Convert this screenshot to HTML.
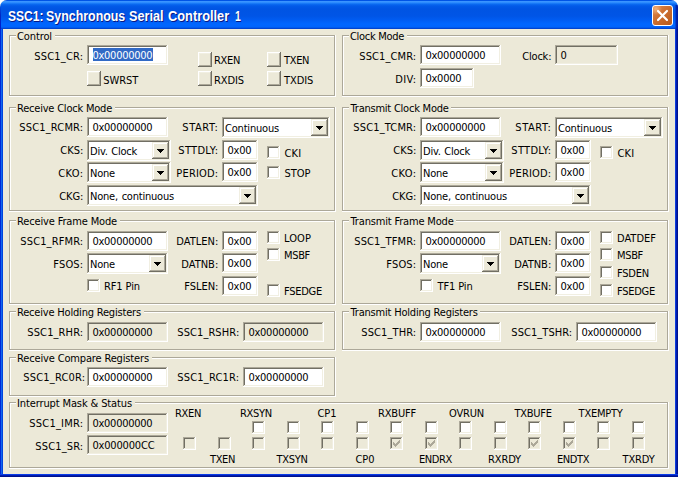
<!DOCTYPE html>
<html lang="en">
<head>
<meta charset="utf-8">
<title>SSC1: Synchronous Serial Controller 1</title>
<style>
html,body{margin:0;padding:0;}
body{width:678px;height:477px;overflow:hidden;background:#fff;position:relative;font-family:"DejaVu Sans Condensed","Liberation Sans",sans-serif;}
#w{position:absolute;left:0;top:0;width:678px;height:477px;background:#ECE9D8;overflow:hidden;border-radius:7px 7px 0 0;}
#tb{position:absolute;left:0;top:0;width:678px;height:29px;background:linear-gradient(to bottom,#0054E6 0,#0054E6 1px,#3C96FF 1px,#3792FF 2px,#2486FC 3px,#0C6CF2 4px,#025AE8 6px,#0054E3 9px,#0055E6 16px,#005CF2 20px,#0066FF 24px,#0064FC 27px,#0050E0 28px,#0038C2 29px);}
#ti{position:absolute;left:0;top:8px;width:400px;height:16px;font:bold 14px/16px "Liberation Sans",sans-serif;color:#fff;white-space:nowrap;text-shadow:1px 1px 0 #0A1883;}
#ti span{position:absolute;top:0;transform-origin:0 0;}
#bl{position:absolute;left:0;top:29px;width:3px;height:448px;background:linear-gradient(to right,#0028D6 0 1px,#1268EE 1px 2px,#0044DE 2px 3px);}
#bl2{position:absolute;left:0;top:6px;width:1px;height:23px;background:linear-gradient(to bottom,rgba(0,30,190,0),#0028C4 40%,#0019CF);}
#br{position:absolute;left:675px;top:29px;width:3px;height:448px;background:linear-gradient(to right,#0C3CDC 0 1px,#001DB0 1px 2px,#00128C 2px 3px);}
#br2{position:absolute;left:675px;top:5px;width:3px;height:24px;background:linear-gradient(to right,rgba(0,50,200,.3),#0024B0 50%,#001A98);}
#bb{position:absolute;left:0;top:474px;width:678px;height:3px;background:linear-gradient(to bottom,#0A3CE6 0 1px,#001BB0 1px 2px,#00128A 2px 3px);}
#x{position:absolute;left:652px;top:5px;width:19px;height:19px;border:1px solid #fff;border-radius:3px;background:radial-gradient(circle at 3px 3px,#F0B078 0,rgba(226,145,88,0) 6px),linear-gradient(135deg,#DE8A50 0%,#CC6E30 45%,#B85A1C 100%);}
.t{position:absolute;font-size:11px;line-height:13px;white-space:nowrap;color:#000;}
.g,.e,.cb,.rb,.c{position:absolute;background:
linear-gradient(var(--a),var(--a)) left 0 top 0/calc(100% - 1px) 1px no-repeat,
linear-gradient(var(--a),var(--a)) left 0 top 0/1px calc(100% - 1px) no-repeat,
linear-gradient(var(--b),var(--b)) left 0 bottom 0/100% 1px no-repeat,
linear-gradient(var(--b),var(--b)) right 0 top 0/1px 100% no-repeat,
linear-gradient(var(--c),var(--c)) left 1px top 1px/calc(100% - 3px) 1px no-repeat,
linear-gradient(var(--c),var(--c)) left 1px top 1px/1px calc(100% - 3px) no-repeat,
linear-gradient(var(--d),var(--d)) left 1px bottom 1px/calc(100% - 2px) 1px no-repeat,
linear-gradient(var(--d),var(--d)) right 1px top 1px/1px calc(100% - 2px) no-repeat,
var(--f);}
.g{--a:#ACA899;--b:#fff;--c:#fff;--d:#ACA899;--f:transparent;}
.gl{position:absolute;background:#ECE9D8;}
.e,.c{--a:#ACA899;--b:#fff;--c:#716F64;--d:#F1EFE2;--f:#fff;}
.e.ro,.c.dis{--f:#ECE9D8;}
.sel{position:absolute;background:#316AC5;}
.cb{width:17px;height:17px;--a:#F1EFE2;--b:#716F64;--c:#fff;--d:#ACA899;--f:#ECE9D8;}
.rb{width:14px;height:15px;--a:#fff;--b:#716F64;--c:#F1EFE2;--d:#ACA899;--f:#ECE9D8;}
.c{width:13px;height:13px;}
.ar{position:absolute;display:block;}
</style>
</head>
<body>
<div id="w">
<div id="tb"></div>
<div id="ti"><span style="left:7.7px;transform:scaleX(.86)">SSC1:</span> <span style="left:46.1px;transform:scaleX(.886)">Synchronous</span> <span style="left:129.1px;transform:scaleX(.905)">Serial</span> <span style="left:168px;transform:scaleX(.915)">Controller</span> <span style="left:235.2px;transform:scaleX(.75)">1</span></div>
<div id="x"><svg width="19" height="19" viewBox="0 0 19 19" style="display:block"><path d="M5 5l9 9M14 5l-9 9" stroke="#fff" stroke-width="2.2" stroke-linecap="round" fill="none"/></svg></div>
<div id="bl"></div><div id="bl2"></div><div id="br"></div><div id="br2"></div><div id="bb"></div>
<div class="g" style="left:9px;top:35px;width:327px;height:62px"></div>
<div class="gl" style="left:16px;top:34px;width:39px;height:4px"></div>
<div class="t" style="left:17px;top:30px;letter-spacing:-0.11px;">Control</div>
<div class="t" style="left:34.3px;top:50px;letter-spacing:0.19px;">SSC1_CR:</div>
<div class="e" style="left:87px;top:45px;width:81px;height:20px"></div>
<div class="sel" style="left:93px;top:48px;width:60px;height:13px"></div>
<div class="t" style="left:92.4px;top:49px;letter-spacing:-0.25px;color:#fff;">0x00000000</div>
<div class="rb" style="left:87px;top:71px"></div>
<div class="t" style="left:103.3px;top:74px;letter-spacing:-0.06px;">SWRST</div>
<div class="rb" style="left:198px;top:52px"></div>
<div class="t" style="left:214px;top:54px;letter-spacing:-0.33px;">RXEN</div>
<div class="rb" style="left:198px;top:71px"></div>
<div class="t" style="left:214px;top:74px;letter-spacing:-0.10px;">RXDIS</div>
<div class="rb" style="left:267px;top:52px"></div>
<div class="t" style="left:284.1px;top:54px;letter-spacing:-0.37px;">TXEN</div>
<div class="rb" style="left:267px;top:71px"></div>
<div class="t" style="left:284.1px;top:74px;letter-spacing:-0.13px;">TXDIS</div>
<div class="g" style="left:342px;top:35px;width:327px;height:62px"></div>
<div class="gl" style="left:349px;top:34px;width:58px;height:4px"></div>
<div class="t" style="left:350px;top:30px;letter-spacing:-0.30px;">Clock Mode</div>
<div class="t" style="left:359.3px;top:50px;letter-spacing:0.10px;">SSC1_CMR:</div>
<div class="e" style="left:420px;top:45px;width:81px;height:20px"></div>
<div class="t" style="left:425.4px;top:49px;letter-spacing:-0.25px;">0x00000000</div>
<div class="t" style="left:395.3px;top:73px;letter-spacing:0.31px;">DIV:</div>
<div class="e" style="left:420px;top:68px;width:54px;height:20px"></div>
<div class="t" style="left:425.4px;top:72px;letter-spacing:-0.22px;">0x0000</div>
<div class="t" style="left:522.3px;top:50px;letter-spacing:-0.21px;">Clock:</div>
<div class="e ro" style="left:555px;top:45px;width:63px;height:20px"></div>
<div class="t" style="left:560.4px;top:49px;letter-spacing:-0.30px;">0</div>
<div class="g" style="left:9px;top:107px;width:327px;height:105px"></div>
<div class="gl" style="left:16px;top:106px;width:99px;height:4px"></div>
<div class="t" style="left:17px;top:102px;letter-spacing:-0.21px;">Receive Clock Mode</div>
<div class="t" style="left:19.3px;top:121px;letter-spacing:0.16px;">SSC1_RCMR:</div>
<div class="e" style="left:87px;top:117px;width:81px;height:20px"></div>
<div class="t" style="left:92.4px;top:121px;letter-spacing:-0.25px;">0x00000000</div>
<div class="t" style="left:60.3px;top:144px;letter-spacing:-0.01px;">CKS:</div>
<div class="e" style="left:87px;top:140px;width:84px;height:21px"></div>
<div class="cb" style="left:152px;top:142px"></div>
<svg class="ar" style="left:157px;top:149px" width="7" height="4" viewBox="0 0 7 4"><path d="M0 0h7v1h-1v1h-1v1h-1v1h-1v-1h-1v-1h-1v-1h-1z" fill="#000"/></svg>
<div class="t" style="left:90px;top:145px;word-spacing:0.8px;letter-spacing:-0.23px;">Div. Clock</div>
<div class="t" style="left:58.3px;top:167px;letter-spacing:0.32px;">CKO:</div>
<div class="e" style="left:87px;top:162px;width:84px;height:21px"></div>
<div class="cb" style="left:152px;top:164px"></div>
<svg class="ar" style="left:157px;top:171px" width="7" height="4" viewBox="0 0 7 4"><path d="M0 0h7v1h-1v1h-1v1h-1v1h-1v-1h-1v-1h-1v-1h-1z" fill="#000"/></svg>
<div class="t" style="left:90px;top:167px;letter-spacing:-0.21px;">None</div>
<div class="t" style="left:59.3px;top:190px;letter-spacing:-0.10px;">CKG:</div>
<div class="e" style="left:87px;top:185px;width:171px;height:21px"></div>
<div class="cb" style="left:239px;top:187px"></div>
<svg class="ar" style="left:244px;top:194px" width="7" height="4" viewBox="0 0 7 4"><path d="M0 0h7v1h-1v1h-1v1h-1v1h-1v-1h-1v-1h-1v-1h-1z" fill="#000"/></svg>
<div class="t" style="left:90px;top:190px;word-spacing:0.8px;letter-spacing:-0.21px;">None, continuous</div>
<div class="t" style="left:182.3px;top:121px;letter-spacing:0.59px;">START:</div>
<div class="e" style="left:222px;top:117px;width:108px;height:21px"></div>
<div class="cb" style="left:311px;top:119px"></div>
<svg class="ar" style="left:316px;top:126px" width="7" height="4" viewBox="0 0 7 4"><path d="M0 0h7v1h-1v1h-1v1h-1v1h-1v-1h-1v-1h-1v-1h-1z" fill="#000"/></svg>
<div class="t" style="left:225px;top:122px;letter-spacing:-0.19px;">Continuous</div>
<div class="t" style="left:178.3px;top:144px;letter-spacing:0.32px;">STTDLY:</div>
<div class="e" style="left:222px;top:140px;width:36px;height:20px"></div>
<div class="t" style="left:227.4px;top:144px;letter-spacing:-0.19px;">0x00</div>
<div class="t" style="left:176.3px;top:167px;letter-spacing:0.18px;">PERIOD:</div>
<div class="e" style="left:222px;top:162px;width:36px;height:20px"></div>
<div class="t" style="left:227.4px;top:166px;letter-spacing:-0.19px;">0x00</div>
<div class="c" style="left:267px;top:146px"></div>
<div class="t" style="left:284.4px;top:147px;letter-spacing:0.22px;">CKI</div>
<div class="c" style="left:267px;top:166px"></div>
<div class="t" style="left:284.4px;top:167px;letter-spacing:-0.02px;">STOP</div>
<div class="g" style="left:342px;top:107px;width:327px;height:105px"></div>
<div class="gl" style="left:349px;top:106px;width:102px;height:4px"></div>
<div class="t" style="left:350.6px;top:102px;letter-spacing:-0.23px;">Transmit Clock Mode</div>
<div class="t" style="left:353.3px;top:121px;letter-spacing:0.15px;">SSC1_TCMR:</div>
<div class="e" style="left:420px;top:117px;width:81px;height:20px"></div>
<div class="t" style="left:425.4px;top:121px;letter-spacing:-0.25px;">0x00000000</div>
<div class="t" style="left:393.3px;top:144px;letter-spacing:-0.01px;">CKS:</div>
<div class="e" style="left:420px;top:140px;width:84px;height:21px"></div>
<div class="cb" style="left:485px;top:142px"></div>
<svg class="ar" style="left:490px;top:149px" width="7" height="4" viewBox="0 0 7 4"><path d="M0 0h7v1h-1v1h-1v1h-1v1h-1v-1h-1v-1h-1v-1h-1z" fill="#000"/></svg>
<div class="t" style="left:423px;top:145px;word-spacing:0.8px;letter-spacing:-0.23px;">Div. Clock</div>
<div class="t" style="left:391.3px;top:167px;letter-spacing:0.32px;">CKO:</div>
<div class="e" style="left:420px;top:162px;width:84px;height:21px"></div>
<div class="cb" style="left:485px;top:164px"></div>
<svg class="ar" style="left:490px;top:171px" width="7" height="4" viewBox="0 0 7 4"><path d="M0 0h7v1h-1v1h-1v1h-1v1h-1v-1h-1v-1h-1v-1h-1z" fill="#000"/></svg>
<div class="t" style="left:423px;top:167px;letter-spacing:-0.21px;">None</div>
<div class="t" style="left:392.3px;top:190px;letter-spacing:-0.10px;">CKG:</div>
<div class="e" style="left:420px;top:185px;width:171px;height:21px"></div>
<div class="cb" style="left:572px;top:187px"></div>
<svg class="ar" style="left:577px;top:194px" width="7" height="4" viewBox="0 0 7 4"><path d="M0 0h7v1h-1v1h-1v1h-1v1h-1v-1h-1v-1h-1v-1h-1z" fill="#000"/></svg>
<div class="t" style="left:423px;top:190px;word-spacing:0.8px;letter-spacing:-0.21px;">None, continuous</div>
<div class="t" style="left:515.3px;top:121px;letter-spacing:0.59px;">START:</div>
<div class="e" style="left:555px;top:117px;width:108px;height:21px"></div>
<div class="cb" style="left:644px;top:119px"></div>
<svg class="ar" style="left:649px;top:126px" width="7" height="4" viewBox="0 0 7 4"><path d="M0 0h7v1h-1v1h-1v1h-1v1h-1v-1h-1v-1h-1v-1h-1z" fill="#000"/></svg>
<div class="t" style="left:558px;top:122px;letter-spacing:-0.19px;">Continuous</div>
<div class="t" style="left:511.3px;top:144px;letter-spacing:0.32px;">STTDLY:</div>
<div class="e" style="left:555px;top:140px;width:36px;height:20px"></div>
<div class="t" style="left:560.4px;top:144px;letter-spacing:-0.19px;">0x00</div>
<div class="t" style="left:509.3px;top:167px;letter-spacing:0.18px;">PERIOD:</div>
<div class="e" style="left:555px;top:162px;width:36px;height:20px"></div>
<div class="t" style="left:560.4px;top:166px;letter-spacing:-0.19px;">0x00</div>
<div class="c" style="left:600px;top:146px"></div>
<div class="t" style="left:617.4px;top:147px;letter-spacing:0.22px;">CKI</div>
<div class="g" style="left:9px;top:220px;width:327px;height:85px"></div>
<div class="gl" style="left:16px;top:219px;width:104px;height:4px"></div>
<div class="t" style="left:17px;top:215px;letter-spacing:-0.15px;">Receive Frame Mode</div>
<div class="t" style="left:20.3px;top:235px;letter-spacing:0.13px;">SSC1_RFMR:</div>
<div class="e" style="left:87px;top:231px;width:81px;height:20px"></div>
<div class="t" style="left:92.4px;top:235px;letter-spacing:-0.25px;">0x00000000</div>
<div class="t" style="left:53.3px;top:258px;letter-spacing:0.16px;">FSOS:</div>
<div class="e" style="left:87px;top:253px;width:81px;height:21px"></div>
<div class="cb" style="left:149px;top:255px"></div>
<svg class="ar" style="left:154px;top:262px" width="7" height="4" viewBox="0 0 7 4"><path d="M0 0h7v1h-1v1h-1v1h-1v1h-1v-1h-1v-1h-1v-1h-1z" fill="#000"/></svg>
<div class="t" style="left:90px;top:258px;letter-spacing:-0.21px;">None</div>
<div class="c" style="left:87px;top:279px"></div>
<div class="t" style="left:104px;top:280px;letter-spacing:-0.11px;">RF1 Pin</div>
<div class="t" style="left:176.3px;top:235px;letter-spacing:0.02px;">DATLEN:</div>
<div class="e" style="left:222px;top:231px;width:36px;height:20px"></div>
<div class="t" style="left:227.4px;top:235px;letter-spacing:-0.19px;">0x00</div>
<div class="t" style="left:181.3px;top:258px;letter-spacing:0.01px;">DATNB:</div>
<div class="e" style="left:222px;top:253px;width:36px;height:20px"></div>
<div class="t" style="left:227.4px;top:257px;letter-spacing:-0.19px;">0x00</div>
<div class="t" style="left:184.3px;top:280px;letter-spacing:-0.05px;">FSLEN:</div>
<div class="e" style="left:222px;top:276px;width:36px;height:20px"></div>
<div class="t" style="left:227.4px;top:280px;letter-spacing:-0.19px;">0x00</div>
<div class="c" style="left:267px;top:231px"></div>
<div class="t" style="left:284px;top:232px;letter-spacing:0.08px;">LOOP</div>
<div class="c" style="left:267px;top:248px"></div>
<div class="t" style="left:284px;top:249px;letter-spacing:-0.33px;">MSBF</div>
<div class="c" style="left:267px;top:284px"></div>
<div class="t" style="left:284px;top:285px;letter-spacing:-0.27px;">FSEDGE</div>
<div class="g" style="left:342px;top:220px;width:327px;height:85px"></div>
<div class="gl" style="left:349px;top:219px;width:107px;height:4px"></div>
<div class="t" style="left:350.6px;top:215px;letter-spacing:-0.17px;">Transmit Frame Mode</div>
<div class="t" style="left:354.3px;top:235px;letter-spacing:0.11px;">SSC1_TFMR:</div>
<div class="e" style="left:420px;top:231px;width:81px;height:20px"></div>
<div class="t" style="left:425.4px;top:235px;letter-spacing:-0.25px;">0x00000000</div>
<div class="t" style="left:386.3px;top:258px;letter-spacing:0.16px;">FSOS:</div>
<div class="e" style="left:420px;top:253px;width:81px;height:21px"></div>
<div class="cb" style="left:482px;top:255px"></div>
<svg class="ar" style="left:487px;top:262px" width="7" height="4" viewBox="0 0 7 4"><path d="M0 0h7v1h-1v1h-1v1h-1v1h-1v-1h-1v-1h-1v-1h-1z" fill="#000"/></svg>
<div class="t" style="left:423px;top:258px;letter-spacing:-0.21px;">None</div>
<div class="c" style="left:420px;top:279px"></div>
<div class="t" style="left:437.6px;top:280px;letter-spacing:-0.13px;">TF1 Pin</div>
<div class="t" style="left:509.3px;top:235px;letter-spacing:0.02px;">DATLEN:</div>
<div class="e" style="left:555px;top:231px;width:36px;height:20px"></div>
<div class="t" style="left:560.4px;top:235px;letter-spacing:-0.19px;">0x00</div>
<div class="t" style="left:514.3px;top:258px;letter-spacing:0.01px;">DATNB:</div>
<div class="e" style="left:555px;top:253px;width:36px;height:20px"></div>
<div class="t" style="left:560.4px;top:257px;letter-spacing:-0.19px;">0x00</div>
<div class="t" style="left:517.3px;top:280px;letter-spacing:-0.05px;">FSLEN:</div>
<div class="e" style="left:555px;top:276px;width:36px;height:20px"></div>
<div class="t" style="left:560.4px;top:280px;letter-spacing:-0.19px;">0x00</div>
<div class="c" style="left:600px;top:231px"></div>
<div class="t" style="left:617px;top:232px;letter-spacing:0.01px;">DATDEF</div>
<div class="c" style="left:600px;top:248px"></div>
<div class="t" style="left:617px;top:249px;letter-spacing:-0.33px;">MSBF</div>
<div class="c" style="left:600px;top:266px"></div>
<div class="t" style="left:617px;top:267px;letter-spacing:-0.21px;">FSDEN</div>
<div class="c" style="left:600px;top:284px"></div>
<div class="t" style="left:617px;top:285px;letter-spacing:-0.27px;">FSEDGE</div>
<div class="g" style="left:9px;top:311px;width:327px;height:40px"></div>
<div class="gl" style="left:16px;top:310px;width:128px;height:4px"></div>
<div class="t" style="left:17px;top:306px;letter-spacing:-0.19px;">Receive Holding Registers</div>
<div class="t" style="left:27.3px;top:326px;letter-spacing:0.12px;">SSC1_RHR:</div>
<div class="e ro" style="left:87px;top:322px;width:81px;height:20px"></div>
<div class="t" style="left:92.4px;top:326px;letter-spacing:-0.25px;">0x00000000</div>
<div class="t" style="left:177.3px;top:326px;letter-spacing:0.08px;">SSC1_RSHR:</div>
<div class="e ro" style="left:243px;top:322px;width:81px;height:20px"></div>
<div class="t" style="left:248.4px;top:326px;letter-spacing:-0.25px;">0x00000000</div>
<div class="g" style="left:342px;top:311px;width:327px;height:40px"></div>
<div class="gl" style="left:349px;top:310px;width:131px;height:4px"></div>
<div class="t" style="left:350.6px;top:306px;letter-spacing:-0.20px;">Transmit Holding Registers</div>
<div class="t" style="left:361.3px;top:326px;letter-spacing:0.10px;">SSC1_THR:</div>
<div class="e" style="left:420px;top:322px;width:81px;height:20px"></div>
<div class="t" style="left:425.4px;top:326px;letter-spacing:-0.25px;">0x00000000</div>
<div class="t" style="left:511.3px;top:326px;letter-spacing:0.06px;">SSC1_TSHR:</div>
<div class="e" style="left:576px;top:322px;width:81px;height:20px"></div>
<div class="t" style="left:581.4px;top:326px;letter-spacing:-0.25px;">0x00000000</div>
<div class="g" style="left:9px;top:357px;width:327px;height:40px"></div>
<div class="gl" style="left:16px;top:356px;width:136px;height:4px"></div>
<div class="t" style="left:17px;top:352px;letter-spacing:-0.15px;">Receive Compare Registers</div>
<div class="t" style="left:23.3px;top:371px;letter-spacing:0.19px;">SSC1_RC0R:</div>
<div class="e" style="left:87px;top:367px;width:81px;height:20px"></div>
<div class="t" style="left:92.4px;top:371px;letter-spacing:-0.25px;">0x00000000</div>
<div class="t" style="left:177.3px;top:371px;letter-spacing:0.19px;">SSC1_RC1R:</div>
<div class="e" style="left:243px;top:367px;width:81px;height:20px"></div>
<div class="t" style="left:248.4px;top:371px;letter-spacing:-0.25px;">0x00000000</div>
<div class="g" style="left:9px;top:402px;width:660px;height:67px"></div>
<div class="gl" style="left:16px;top:401px;width:119px;height:4px"></div>
<div class="t" style="left:17px;top:397px;letter-spacing:-0.12px;">Interrupt Mask &amp; Status</div>
<div class="t" style="left:29.3px;top:417px;letter-spacing:0.22px;">SSC1_IMR:</div>
<div class="e ro" style="left:87px;top:413px;width:81px;height:20px"></div>
<div class="t" style="left:92.4px;top:417px;letter-spacing:-0.25px;">0x00000000</div>
<div class="t" style="left:35.3px;top:440px;letter-spacing:0.14px;">SSC1_SR:</div>
<div class="e ro" style="left:87px;top:435px;width:81px;height:20px"></div>
<div class="t" style="left:92.4px;top:439px;letter-spacing:-0.17px;">0x000000CC</div>
<div class="c dis" style="left:183px;top:437px"></div>
<div class="c dis" style="left:218px;top:437px"></div>
<div class="c" style="left:252px;top:421px"></div>
<div class="c dis" style="left:252px;top:437px"></div>
<div class="c" style="left:287px;top:421px"></div>
<div class="c dis" style="left:287px;top:437px"></div>
<div class="c" style="left:321px;top:421px"></div>
<div class="c dis" style="left:321px;top:437px"></div>
<div class="c" style="left:356px;top:421px"></div>
<div class="c dis" style="left:356px;top:437px"></div>
<div class="c" style="left:390px;top:421px"></div>
<div class="c dis" style="left:390px;top:437px"></div>
<svg class="ar" style="left:393px;top:440px" width="7" height="7" viewBox="0 0 7 7"><path d="M0 2h1v3H0zM1 3h1v3H1zM2 4h1v3H2zM3 3h1v3H3zM4 2h1v3H4zM5 1h1v3H5zM6 0h1v3H6z" fill="#ACA899" shape-rendering="crispEdges"/></svg>
<div class="c" style="left:425px;top:421px"></div>
<div class="c dis" style="left:425px;top:437px"></div>
<svg class="ar" style="left:428px;top:440px" width="7" height="7" viewBox="0 0 7 7"><path d="M0 2h1v3H0zM1 3h1v3H1zM2 4h1v3H2zM3 3h1v3H3zM4 2h1v3H4zM5 1h1v3H5zM6 0h1v3H6z" fill="#ACA899" shape-rendering="crispEdges"/></svg>
<div class="c" style="left:459px;top:421px"></div>
<div class="c dis" style="left:459px;top:437px"></div>
<div class="c" style="left:494px;top:421px"></div>
<div class="c dis" style="left:494px;top:437px"></div>
<div class="c" style="left:528px;top:421px"></div>
<div class="c dis" style="left:528px;top:437px"></div>
<svg class="ar" style="left:531px;top:440px" width="7" height="7" viewBox="0 0 7 7"><path d="M0 2h1v3H0zM1 3h1v3H1zM2 4h1v3H2zM3 3h1v3H3zM4 2h1v3H4zM5 1h1v3H5zM6 0h1v3H6z" fill="#ACA899" shape-rendering="crispEdges"/></svg>
<div class="c" style="left:563px;top:421px"></div>
<div class="c dis" style="left:563px;top:437px"></div>
<svg class="ar" style="left:566px;top:440px" width="7" height="7" viewBox="0 0 7 7"><path d="M0 2h1v3H0zM1 3h1v3H1zM2 4h1v3H2zM3 3h1v3H3zM4 2h1v3H4zM5 1h1v3H5zM6 0h1v3H6z" fill="#ACA899" shape-rendering="crispEdges"/></svg>
<div class="c" style="left:597px;top:421px"></div>
<div class="c dis" style="left:597px;top:437px"></div>
<div class="c" style="left:632px;top:421px"></div>
<div class="c dis" style="left:632px;top:437px"></div>
<div class="t" style="left:175px;top:407px;letter-spacing:-0.33px;">RXEN</div>
<div class="t" style="left:240px;top:407px;letter-spacing:-0.28px;">RXSYN</div>
<div class="t" style="left:317.5px;top:407px;letter-spacing:-0.06px;">CP1</div>
<div class="t" style="left:378px;top:407px;letter-spacing:-0.18px;">RXBUFF</div>
<div class="t" style="left:449px;top:407px;letter-spacing:-0.18px;">OVRUN</div>
<div class="t" style="left:514.6px;top:407px;letter-spacing:-0.30px;">TXBUFE</div>
<div class="t" style="left:578.6px;top:407px;letter-spacing:-0.24px;">TXEMPTY</div>
<div class="t" style="left:210.0px;top:453px;letter-spacing:-0.37px;">TXEN</div>
<div class="t" style="left:276.6px;top:453px;letter-spacing:-0.31px;">TXSYN</div>
<div class="t" style="left:355.5px;top:453px;letter-spacing:-0.06px;">CP0</div>
<div class="t" style="left:419px;top:453px;letter-spacing:-0.39px;">ENDRX</div>
<div class="t" style="left:488px;top:453px;letter-spacing:-0.12px;">RXRDY</div>
<div class="t" style="left:557px;top:453px;letter-spacing:-0.42px;">ENDTX</div>
<div class="t" style="left:622.6px;top:453px;letter-spacing:-0.15px;">TXRDY</div>
</div>
</body>
</html>
